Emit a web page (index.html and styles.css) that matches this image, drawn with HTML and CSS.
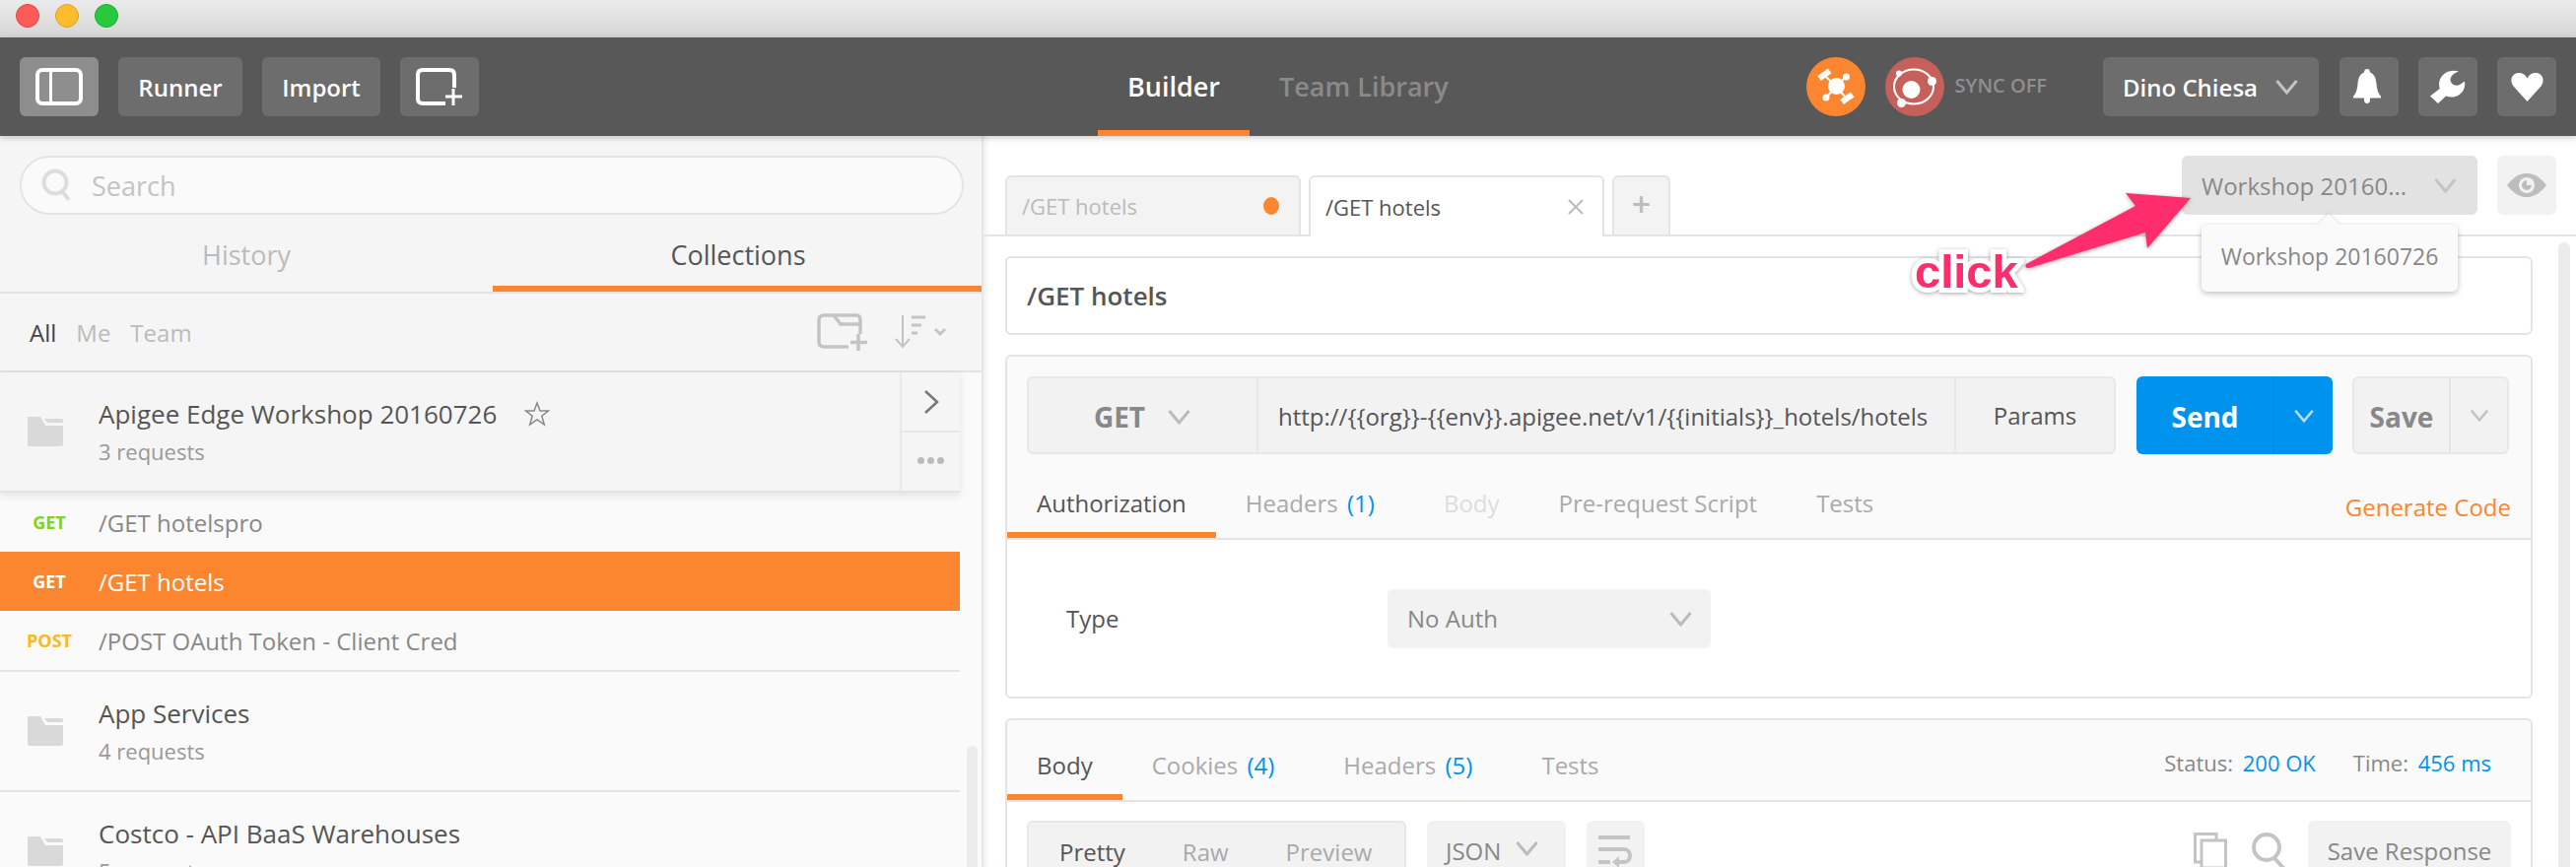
FILE: index.html
```html
<!DOCTYPE html>
<html lang="en">
<head>
  <meta charset="UTF-8">
  <title>Postman Builder</title>
  <link rel="stylesheet" href="styles.css">
</head>
<body>
<svg class="defs" width="0" height="0">
  <symbol id="chev" viewBox="0 0 24 16"><path d="M2 2 L12 14 L22 2" fill="none" stroke="currentColor" stroke-width="3"/></symbol>
  <symbol id="folder" viewBox="0 0 36 30"><path d="M1 0 H13 L18 9 H36 V28 Q36 30 34 30 H2 Q0 30 0 28 V1 Q0 0 1 0 Z M17 2 H34 Q36 2 36 4 V6 H20 Z" fill="#d9d9d9"/></symbol>
</svg>

<div class="titlebar">
  <span class="light red"></span>
  <span class="light yellow"></span>
  <span class="light green"></span>
</div>

<div class="toolbar">
  <div class="tool-left">
    <div class="tool-btn icon-btn active">
      <svg width="48" height="38" viewBox="0 0 48 38"><rect x="2" y="2" width="44" height="34" rx="5" fill="none" stroke="#fff" stroke-width="4"/><path d="M15.500 2 V36" stroke="#fff" stroke-width="3"/></svg>
    </div>
    <div class="tool-btn runner">Runner</div>
    <div class="tool-btn import">Import</div>
    <div class="tool-btn icon-btn">
      <svg width="48" height="38" viewBox="0 0 48 38"><path d="M30 36 H7 Q2 36 2 31 V7 Q2 2 7 2 H34 Q39 2 39 7 V20" fill="none" stroke="#fff" stroke-width="4"/><path d="M38 21 V38 M30 29 H47" stroke="#fff" stroke-width="3"/></svg>
    </div>
  </div>
  <div class="view-tabs">
    <div class="view-tab current">Builder</div>
    <div class="view-tab">Team Library</div>
  </div>
  <div class="tool-right">
    <svg class="round" width="60" height="60" viewBox="0 0 60 60">
      <circle cx="30" cy="30" r="30" fill="#fb862f"/>
      <path d="M30 30 L18 18 M30 30 L41 42 M30 30 L40 20 M30 30 L20 41" stroke="#fff" stroke-width="2"/>
      <circle cx="30.500" cy="29.500" r="8.500" fill="#fff"/>
      <circle cx="40.500" cy="20" r="3.500" fill="#fff"/>
      <circle cx="20" cy="41" r="3.500" fill="#fff"/>
      <rect x="12" y="15" width="13" height="6" transform="rotate(-35 18 18)" fill="#fff"/>
      <rect x="35" y="39" width="13" height="6" transform="rotate(-35 41 42)" fill="#fff"/>
    </svg>
    <svg class="round sync" width="60" height="60" viewBox="0 0 60 60">
      <circle cx="30" cy="30" r="30" fill="#c6605b"/>
      <ellipse cx="29" cy="30" rx="20" ry="17.500" fill="none" stroke="#fff" stroke-width="2"/>
      <circle cx="26.500" cy="33" r="9" fill="#fff"/>
      <circle cx="47.500" cy="24.500" r="4.500" fill="#fff"/>
      <circle cx="16.500" cy="46.500" r="4.500" fill="#fff"/>
      <circle cx="14" cy="16.500" r="3" fill="#fff"/>
    </svg>
    <div class="sync-off">SYNC OFF</div>
    <div class="tool-btn user">Dino Chiesa <svg class="chev" width="25" height="16"><use href="#chev"/></svg></div>
    <div class="tool-btn square">
      <svg width="60" height="60" viewBox="0 0 60 60"><path d="M28 12 C26 12 25 13.500 25 15.500 C20 17.500 19 22 18.500 27 C18 33 16.500 37.500 14 39.500 V41.500 H25 V44 C25 46 26.500 47 28 47 C29.500 47 31 46 31 44 V41.500 H42 V39.500 C39.500 37.500 38 33 37.500 27 C37 22 36 17.500 31 15.500 C31 13.500 30 12 28 12 Z" fill="#fff"/></svg>
    </div>
    <div class="tool-btn square">
      <svg width="60" height="60" viewBox="0 0 60 60"><path d="M41 14.500 C32 12 24 16 21.500 24 C20.800 27 21 29.500 21.800 32 L12 39.500 L20 47 L28 39.500 C32 41 37 41 41 38.500 C45.500 35.500 48 31 47 24.500 L42 28 C37 30 33 27 32.500 23 C32.500 19.500 36 16 41 14.500 Z" fill="#fff"/></svg>
    </div>
    <div class="tool-btn square">
      <svg width="60" height="60" viewBox="0 0 60 60"><path d="M30.500 45 L16.500 29.500 C12 23.500 15 16 22 16 C26 16 29 18 30.500 21.500 C32 18 35 16 39 16 C46 16 49 23.500 44.500 29.500 Z" fill="#fff"/></svg>
    </div>
  </div>
</div>

<div class="main">
  <div class="sidebar">
    <div class="search-wrap">
      <div class="search">
        <svg width="32" height="34" viewBox="0 0 32 34"><circle cx="14" cy="14" r="11.500" fill="none" stroke="#ddd" stroke-width="4"/><path d="M21 23 L28 32" stroke="#ddd" stroke-width="4"/></svg>
        <span>Search</span>
      </div>
    </div>
    <div class="side-tabs">
      <div class="side-tab">History</div>
      <div class="side-tab current">Collections</div>
    </div>
    <div class="filter-row">
      <span class="filter current">All</span>
      <span class="filter">Me</span>
      <span class="filter">Team</span>
      <svg class="new-folder" width="52" height="38" viewBox="0 0 52 38"><path d="M32 34 H7 Q2 34 2 29 V7 Q2 2 7 2 H40 Q44 2 44 7 V21 M17 2 L24 11 H44" fill="none" stroke="#c4c4c4" stroke-width="3.500"/><path d="M42 21 V38 M34 29.500 H51" stroke="#c4c4c4" stroke-width="3.500"/></svg>
      <svg class="sort" width="56" height="36" viewBox="0 0 56 36"><path d="M9 1 V33 M2 25 L9 33 L16 25" fill="none" stroke="#c4c4c4" stroke-width="2"/><path d="M18 3 H32 M18 11 H28 M18 19 H24" stroke="#c4c4c4" stroke-width="3"/><path d="M42 15 L47 20 L52 15" fill="none" stroke="#c4c4c4" stroke-width="3"/></svg>
    </div>
    <div class="side-body">
      <div class="list">
        <div class="collection open">
          <svg class="folder" width="36" height="30"><use href="#folder"/></svg>
          <div class="coll-text">
            <div class="coll-name">Apigee Edge Workshop 20160726
              <svg class="star" width="26" height="26" viewBox="0 0 26 26"><path d="M13 2 L16 10 H24.500 L17.800 15.200 L20.300 24 L13 18.800 L5.700 24 L8.200 15.200 L1.500 10 H10 Z" fill="none" stroke="#888" stroke-width="1.500"/></svg>
            </div>
            <div class="coll-sub">3 requests</div>
          </div>
          <div class="coll-side">
            <div class="coll-btn">
              <svg width="16" height="24" viewBox="0 0 16 24"><path d="M2 1 L14 12 L2 23" fill="none" stroke="#777" stroke-width="2.500"/></svg>
            </div>
            <div class="coll-btn dots"><i></i><i></i><i></i></div>
          </div>
        </div>
        <div class="req"><span class="method get">GET</span>/GET hotelspro</div>
        <div class="req selected"><span class="method">GET</span>/GET hotels</div>
        <div class="req"><span class="method post">POST</span>/POST OAuth Token - Client Cred</div>
        <div class="collection">
          <svg class="folder" width="36" height="30"><use href="#folder"/></svg>
          <div class="coll-text">
            <div class="coll-name">App Services</div>
            <div class="coll-sub">4 requests</div>
          </div>
        </div>
        <div class="collection">
          <svg class="folder" width="36" height="30"><use href="#folder"/></svg>
          <div class="coll-text">
            <div class="coll-name">Costco - API BaaS Warehouses</div>
            <div class="coll-sub">5 requests</div>
          </div>
        </div>
      </div>
      <div class="side-scroll"></div>
    </div>
  </div>

  <div class="builder">
    <div class="tab-row">
      <div class="req-tab back"><span>/GET hotels</span><i class="dot"></i></div>
      <div class="req-tab"><span>/GET hotels</span>
        <svg width="18" height="18" viewBox="0 0 18 18"><path d="M2 2 L16 16 M16 2 L2 16" stroke="#bbb" stroke-width="2"/></svg>
      </div>
      <div class="req-tab add">+</div>
      <div class="env">
        <div class="env-select">
          <span>Workshop 20160...</span>
          <svg class="chev" width="25" height="16"><use href="#chev"/></svg>
        </div>
        <div class="eye">
          <svg width="40" height="24" viewBox="0 0 40 24"><path d="M0 12 C8 2 14 0 20 0 C26 0 32 2 40 12 C32 22 26 24 20 24 C14 24 8 22 0 12 Z" fill="#bdbdbd"/><circle cx="20" cy="12" r="8" fill="#f2f2f2"/><path d="M20 7 A5 5 0 1 0 25 12 H20 Z" fill="#bdbdbd"/></svg>
        </div>
      </div>
      <div class="tooltip">Workshop 20160726</div>
    </div>

    <div class="pane">
      <div class="pane-main">
        <div class="title-box">/GET hotels</div>

        <div class="card">
          <div class="url-row">
            <div class="url-bar">
              <div class="method-select">GET <svg class="chev" width="25" height="16"><use href="#chev"/></svg></div>
              <div class="url">http://{{org}}-{{env}}.apigee.net/v1/{{initials}}_hotels/hotels</div>
              <div class="params">Params</div>
            </div>
            <div class="send">
              <span>Send</span>
              <div class="split"><svg width="22" height="14"><use href="#chev"/></svg></div>
            </div>
            <div class="save">
              <span>Save</span>
              <div class="split"><svg width="20" height="13"><use href="#chev"/></svg></div>
            </div>
          </div>
          <div class="tabs">
            <div class="tab current">Authorization</div>
            <div class="tab has-count">Headers <b>(1)</b></div>
            <div class="tab faint">Body</div>
            <div class="tab">Pre-request Script</div>
            <div class="tab">Tests</div>
            <div class="gen-code">Generate Code</div>
          </div>
          <div class="auth">
            <div class="auth-label">Type</div>
            <div class="auth-select">No Auth <svg class="chev" width="25" height="16"><use href="#chev"/></svg></div>
          </div>
        </div>

        <div class="card response">
          <div class="tabs">
            <div class="tab current">Body</div>
            <div class="tab has-count">Cookies <b>(4)</b></div>
            <div class="tab has-count">Headers <b>(5)</b></div>
            <div class="tab">Tests</div>
            <div class="status">Status: <b>200 OK</b></div>
            <div class="status time">Time: <b>456 ms</b></div>
          </div>
          <div class="res-tools">
            <div class="format">
              <span class="current">Pretty</span>
              <span>Raw</span>
              <span>Preview</span>
            </div>
            <div class="lang">JSON <svg class="chev" width="25" height="16"><use href="#chev"/></svg></div>
            <div class="wrap">
              <svg width="36" height="34" viewBox="0 0 36 34"><path d="M0 2 H32 M0 14 H26 C34 14 34 27 26 27 H18 M0 27 H12" fill="none" stroke="#c4c4c4" stroke-width="4"/><path d="M21 21 L14 27 L21 33 Z" fill="#c4c4c4"/></svg>
            </div>
            <svg class="copy" width="34" height="36" viewBox="0 0 34 36"><path d="M8 30 H1.500 V1.500 H23 V8 M8 8 H32.500 V36 H8 Z" fill="none" stroke="#c4c4c4" stroke-width="3"/></svg>
            <svg class="find" width="36" height="36" viewBox="0 0 36 36"><circle cx="15" cy="15" r="13" fill="none" stroke="#c4c4c4" stroke-width="4"/><path d="M23 26 L32 36" stroke="#c4c4c4" stroke-width="4"/></svg>
            <div class="save-res">Save Response</div>
          </div>
        </div>
      </div>
      <div class="pane-scroll"></div>
    </div>
  </div>
</div>

<!-- annotation on top of the screenshot -->
<svg class="arrow" width="190" height="100" viewBox="0 0 190 100">
  <path d="M4 78 L115 19 L105 6 L171 11 L127 62 L125 46 L7 82 Q2 82 4 78 Z" fill="#ff2d6c"/>
</svg>
<div class="click">click</div>
</body>
</html>
```
FILE: styles.css
```css
* {
  box-sizing: border-box;
}
html, body {
  height: 100%;
}
body {
  margin: 0;
  width: 2614px;
  height: 880px;
  overflow: hidden;
  font-family: "Open Sans", sans-serif;
  font-size: 24px;
  color: #555;
  background-color: #fff;
  position: relative;
}
.defs {
  position: absolute;
}
svg {
  display: block;
  flex: none;
}

/* window title */
.titlebar {
  height: 38px;
  padding: 4px 0 0 16px;
  display: flex;
  gap: 16px;
  background: linear-gradient(#ebebeb, #d5d5d5);
}
.light {
  width: 24px;
  height: 24px;
  border-radius: 50%;
}
.red {
  background-color: #fc5b57;
  border: 1px solid #e2463f;
}
.yellow {
  background-color: #fdbc2e;
  border: 1px solid #e0a028;
}
.green {
  background-color: #28c83f;
  border: 1px solid #17ad2b;
}

/* top toolbar */
.toolbar {
  height: 100px;
  display: flex;
  background-color: #585858;
  position: relative;
  z-index: 2;
  box-shadow: 0 2px 6px rgba(0, 0, 0, 0.2);
}
.tool-left {
  width: 1114px;
  padding: 20px 0 0 20px;
  display: flex;
  gap: 20px;
}
.tool-btn {
  height: 60px;
  border-radius: 6px;
  background-color: #6d6d6d;
  color: #fff;
  font-weight: 600;
  display: flex;
  align-items: center;
  justify-content: center;
}
.icon-btn {
  width: 80px;
}
.icon-btn.active {
  background-color: #8e8e8e;
}
.runner {
  width: 126px;
}
.import {
  width: 120px;
}
.view-tabs {
  display: flex;
}
.view-tab {
  height: 100px;
  padding: 0 30px;
  line-height: 99px;
  font-size: 27px;
  font-weight: 600;
  color: #8a8a8a;
}
.view-tab.current {
  color: #fff;
  border-bottom: 6px solid #fb862f;
}
.tool-right {
  margin-left: auto;
  padding: 20px 20px 0 0;
  display: flex;
  align-items: flex-start;
}
.sync {
  margin-left: 20px;
}
.sync-off {
  margin: 0 57px 0 11px;
  line-height: 58px;
  font-size: 20px;
  font-weight: 600;
  color: #8f8f8f;
}
.user {
  width: 219px;
  gap: 17px;
  margin-right: 21px;
}
.user .chev {
  color: #c4c4c4;
}
.square {
  width: 60px;
  margin-right: 20px;
}
.square:last-child {
  margin-right: 0;
}

/* left side */
.main {
  height: 742px;
  display: flex;
}
.sidebar {
  width: 998px;
  height: 742px;
  overflow: hidden;
  flex: none;
  background-color: #f5f5f5;
  border-right: 2px solid #e6e6e6;
}
.search-wrap {
  padding: 20px 18px 0 20px;
}
.search {
  height: 60px;
  padding-left: 20px;
  display: flex;
  align-items: center;
  gap: 19px;
  background-color: #fafafa;
  border: 2px solid #e4e4e4;
  border-radius: 30px;
  font-size: 27px;
  color: #c4c4c4;
}
.side-tabs {
  height: 80px;
  display: flex;
  border-bottom: 2px solid #e2e2e2;
}
.side-tab {
  width: 500px;
  flex: none;
  text-align: center;
  line-height: 82px;
  font-size: 27px;
  color: #bbb;
}
.side-tab.current {
  width: 498px;
  color: #555;
  border-bottom: 6px solid #fb862f;
}
.filter-row {
  height: 80px;
  padding-left: 30px;
  display: flex;
  align-items: center;
  gap: 20px;
  border-bottom: 2px solid #e2e2e2;
  color: #bbb;
}
.filter.current {
  color: #444;
}
.new-folder {
  margin-left: auto;
}
.sort {
  margin: 0 33px 0 6px;
}
.side-body {
  display: flex;
  background-color: #fafafa;
}
.list {
  width: 974px;
  flex: none;
}
.collection {
  height: 122px;
  display: flex;
  align-items: center;
  border-bottom: 2px solid #e4e4e4;
}
.collection.open {
  background-color: #f5f5f5;
  box-shadow: 0 3px 8px rgba(0, 0, 0, 0.1);
  position: relative;
}
.folder {
  margin: 0 36px 0 28px;
}
.coll-text {
  flex: 1;
  margin-top: -2px;
}
.coll-name {
  display: flex;
  align-items: center;
  gap: 28px;
  font-size: 26px;
  line-height: 38px;
  color: #555;
}
.coll-sub {
  margin-top: 4px;
  font-size: 22px;
  line-height: 30px;
  color: #999;
}
.coll-side {
  width: 61px;
  height: 100%;
  border-left: 2px solid #e8e8e8;
}
.coll-btn {
  height: 59px;
  display: flex;
  align-items: center;
  justify-content: center;
}
.dots {
  gap: 3px;
  border-top: 2px solid #e8e8e8;
}
.dots i {
  width: 7px;
  height: 7px;
  border-radius: 50%;
  background-color: #bbb;
}
.req {
  height: 60px;
  display: flex;
  align-items: center;
  color: #888;
}
.req.selected {
  background-color: #fb862f;
  color: #fff;
  font-weight: 500;
}
.req:nth-child(4) {
  height: 62px;
  border-bottom: 2px solid #e4e4e4;
}
.method {
  width: 100px;
  text-align: center;
  font-size: 18px;
  font-weight: 700;
}
.get {
  color: #80d31e;
}
.post {
  color: #fbb728;
}
.side-scroll {
  width: 11px;
  height: 200px;
  margin: 379px 0 0 7px;
  border-radius: 6px 6px 0 0;
  background-color: #ececec;
}

/* builder panel */
.builder {
  flex: 1;
  min-width: 0;
  height: 742px;
  overflow: hidden;
  box-shadow: inset 5px 0 4px -2px #f0f0f0;
}
.tab-row {
  height: 102px;
  padding: 40px 0 0 22px;
  display: flex;
  gap: 8px;
  border-bottom: 2px solid #e4e4e4;
  position: relative;
}
.req-tab {
  width: 300px;
  height: 62px;
  padding: 0 18px 0 15px;
  display: flex;
  align-items: center;
  justify-content: space-between;
  background-color: #fff;
  border: 2px solid #e4e4e4;
  border-bottom: none;
  border-radius: 6px 6px 0 0;
  font-size: 22px;
  color: #555;
  position: relative;
  z-index: 1;
}
.req-tab.back {
  height: 60px;
  padding-right: 20px;
  background-color: #f3f3f3;
  color: #bbb;
}
.dot {
  width: 16px;
  height: 18px;
  border-radius: 50%;
  background-color: #fb862f;
}
.req-tab.add {
  width: 59px;
  height: 60px;
  padding: 0 0 4px;
  justify-content: center;
  background-color: #f3f3f3;
  font-size: 34px;
  font-weight: 600;
  color: #bbb;
}
.env {
  margin-left: auto;
  margin-top: -20px;
  padding-right: 20px;
  display: flex;
  gap: 20px;
}
.env-select {
  width: 300px;
  height: 60px;
  padding: 0 20px;
  display: flex;
  align-items: center;
  justify-content: space-between;
  border-radius: 6px;
  background-color: #e2e2e2;
  color: #888;
}
.env-select .chev {
  color: #c4c4c4;
}
.eye {
  width: 60px;
  height: 60px;
  display: flex;
  align-items: center;
  justify-content: center;
  border-radius: 6px;
  background-color: #f2f2f2;
}
.tooltip {
  position: absolute;
  top: 90px;
  left: 1236px;
  z-index: 3;
  width: 260px;
  height: 68px;
  text-align: center;
  line-height: 64px;
  font-size: 23px;
  color: #888;
  background-color: #fafafa;
  border-radius: 6px;
  box-shadow: 0 2px 6px rgba(0, 0, 0, 0.25);
}
.tooltip::before {
  content: "";
  position: absolute;
  top: -8px;
  left: 121px;
  width: 16px;
  height: 16px;
  background-color: #fafafa;
  transform: rotate(45deg);
  box-shadow: -1px -1px 2px rgba(0, 0, 0, 0.1);
}
.pane {
  display: flex;
  padding-left: 22px;
}
.pane-main {
  width: 1550px;
  flex: none;
}
.pane-scroll {
  width: 12px;
  height: 640px;
  margin: 6px 0 0 26px;
  border-radius: 6px 6px 0 0;
  background-color: #ececec;
}
.title-box {
  height: 80px;
  margin-top: 20px;
  padding-left: 20px;
  line-height: 76px;
  border: 2px solid #e4e4e4;
  border-radius: 6px;
  font-size: 26px;
  font-weight: 600;
}
.card {
  height: 349px;
  margin-top: 20px;
  border: 2px solid #e4e4e4;
  border-radius: 6px;
  background-color: #fafafa;
  overflow: hidden;
}
.url-row {
  padding: 20px 20px 0;
  display: flex;
}
.url-bar {
  width: 1105px;
  height: 79px;
  display: flex;
  align-items: center;
  border: 2px solid #e8e8e8;
  border-radius: 6px;
  background-color: #f2f2f2;
}
.method-select {
  width: 233px;
  height: 100%;
  padding-top: 2px;
  display: flex;
  align-items: center;
  justify-content: center;
  gap: 22px;
  border-right: 2px solid #e8e8e8;
  font-size: 28px;
  font-weight: 700;
  color: #888;
}
.method-select .chev, .auth-select .chev, .lang .chev {
  color: #bbb;
}
.url {
  flex: 1;
  padding: 2px 0 0 20px;
}
.params {
  width: 162px;
  height: 100%;
  line-height: 76px;
  text-align: center;
  border-left: 2px solid #e8e8e8;
}
.send {
  width: 199px;
  height: 79px;
  margin-left: 21px;
  display: flex;
  align-items: center;
  border-radius: 6px;
  background-color: #0093ee;
  color: #fff;
  font-size: 28px;
  font-weight: 700;
}
.send span {
  width: 139px;
  padding-top: 2px;
  text-align: center;
}
.split {
  flex: 1;
  height: 100%;
  display: flex;
  align-items: center;
  justify-content: center;
}
.send .split {
  border-left: 1px solid #0c7fca;
  color: #b9dcf5;
}
.save {
  width: 159px;
  height: 79px;
  margin-left: 20px;
  display: flex;
  align-items: center;
  border: 2px solid #e8e8e8;
  border-radius: 6px;
  background-color: #f2f2f2;
  font-size: 28px;
  font-weight: 700;
  color: #888;
}
.save span {
  width: 96px;
  padding-top: 2px;
  text-align: center;
}
.save .split {
  border-left: 2px solid #e4e4e4;
  color: #c4c4c4;
}
.tabs {
  height: 87px;
  padding-top: 19px;
  display: flex;
  border-bottom: 2px solid #e4e4e4;
}
.tab {
  padding: 14px 30px 0;
  height: 66px;
  white-space: nowrap;
  color: #aaa;
}
.tab b {
  margin-left: 3px;
  font-weight: 400;
  color: #0093ee;
}
.tab.current {
  color: #555;
  border-bottom: 6px solid #fb862f;
}
.tab.has-count {
  padding-right: 40px;
}
.tab.faint {
  color: #ddd;
}
.gen-code {
  margin-left: auto;
  padding: 18px 20px 0 0;
  color: #fb862f;
}
.auth {
  height: 159px;
  display: flex;
  align-items: center;
  padding-left: 60px;
  background-color: #fff;
}
.auth-label {
  width: 326px;
}
.auth-select {
  width: 328px;
  height: 60px;
  padding: 0 18px 0 20px;
  display: flex;
  align-items: center;
  justify-content: space-between;
  border-radius: 6px;
  background-color: #f2f2f2;
  color: #888;
}
.response {
  height: 170px;
}
.response .tabs {
  height: 83px;
  padding-top: 15px;
}
.response .tab {
  height: 66px;
}
.status {
  margin-left: auto;
  padding-top: 13px;
  font-size: 22px;
  color: #888;
}
.status b {
  margin-left: 4px;
  font-weight: 400;
  color: #0093ee;
}
.time {
  margin-left: 38px;
  margin-right: 40px;
}
.res-tools {
  padding: 19px 20px 0;
  display: flex;
  align-items: flex-start;
  background-color: #fff;
  height: 100px;
}
.format {
  width: 385px;
  height: 70px;
  padding-left: 31px;
  display: flex;
  gap: 58px;
  line-height: 60px;
  border: 2px solid #e8e8e8;
  border-radius: 6px;
  background-color: #f2f2f2;
  color: #aaa;
}
.format .current {
  color: #555;
}
.lang {
  width: 141px;
  height: 70px;
  margin-left: 21px;
  padding: 2px 0 0 19px;
  display: flex;
  align-items: flex-start;
  gap: 14px;
  line-height: 58px;
  border-radius: 6px;
  background-color: #f2f2f2;
  color: #888;
}
.lang .chev {
  margin-top: 18px;
}
.wrap {
  width: 59px;
  height: 70px;
  margin-left: 21px;
  padding: 15px 0 0 12px;
  border-radius: 6px;
  background-color: #f2f2f2;
}
.copy {
  margin: 12px 0 0 auto;
}
.find {
  margin: 12px 0 0 25px;
}
.save-res {
  width: 206px;
  height: 70px;
  margin-left: 21px;
  text-align: center;
  line-height: 62px;
  border-radius: 6px;
  background-color: #f2f2f2;
  color: #888;
}

/* pink note drawn over the screenshot */
.arrow {
  position: absolute;
  left: 2052px;
  top: 190px;
  z-index: 5;
  filter: drop-shadow(0 1px 2px rgba(0, 0, 0, 0.35));
}
.click {
  position: absolute;
  left: 1943px;
  top: 249px;
  z-index: 5;
  font-family: "Liberation Sans", Arial, sans-serif;
  font-size: 47px;
  font-weight: 700;
  line-height: 54px;
  color: #ff2d6c;
  -webkit-text-stroke: 10px #fff;
  paint-order: stroke fill;
  filter: drop-shadow(0 1px 2px rgba(0, 0, 0, 0.35));
}
```
